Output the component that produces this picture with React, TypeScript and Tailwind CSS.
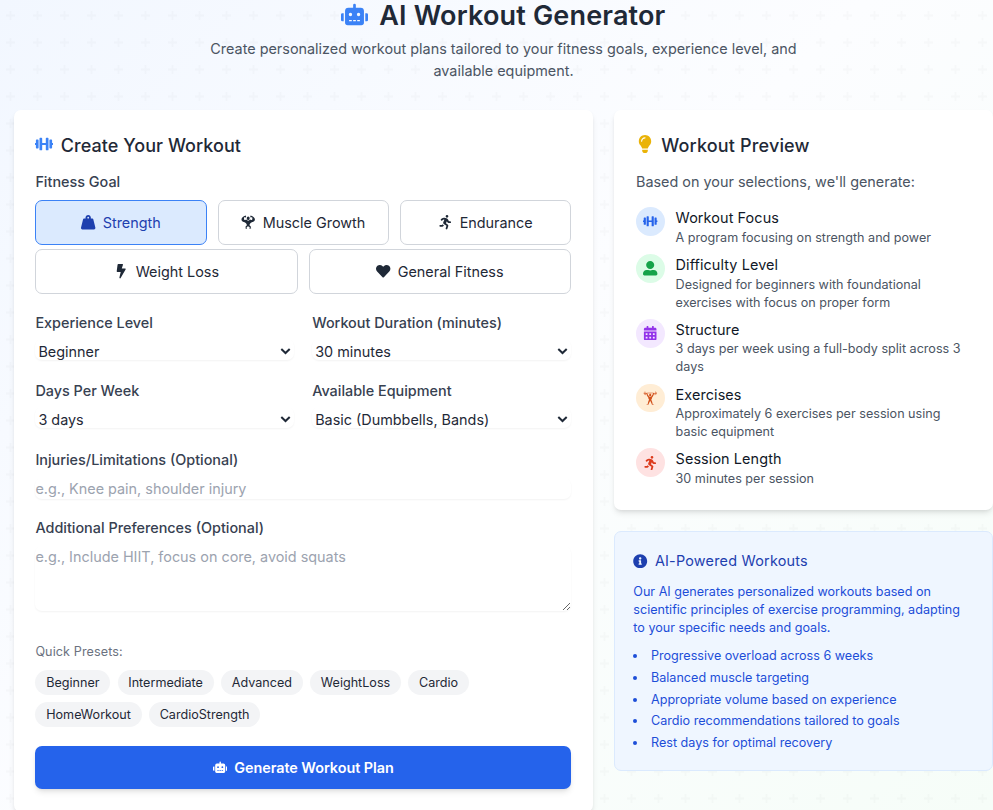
import type { ReactNode } from "react";
import {
  FaBolt,
  FaCalendarAlt,
  FaDumbbell,
  FaHeart,
  FaInfoCircle,
  FaLightbulb,
  FaRobot,
  FaRunning,
  FaUserAlt,
  FaWeightHanging,
} from "react-icons/fa";
import { GiMuscleUp, GiWeightLiftingUp } from "react-icons/gi";

function Backdrop() {
  return (
    <svg className="absolute inset-0 h-full w-full" aria-hidden="true">
      <defs>
        <pattern id="plus" x="6" y="11" width="27" height="27" patternUnits="userSpaceOnUse">
          <path d="M5.4 3.6V0H3.6v3.6H0v1.8h3.6V9h1.8V5.4H9V3.6z" fill="#6b7280" fillOpacity="0.035" />
        </pattern>
      </defs>
      <rect width="100%" height="100%" fill="url(#plus)" />
    </svg>
  );
}

function Goal({ icon, label, active }: { icon: ReactNode; label: string; active?: boolean }) {
  return (
    <button
      type="button"
      className={
        active
          ? "flex h-[45px] flex-1 items-center justify-center gap-[7.2px] rounded-[7px] border border-[#3b82f6] bg-[#dbeafe] text-[#1e40af]"
          : "flex h-[45px] flex-1 items-center justify-center gap-[7.2px] rounded-[7px] border border-[#d1d5db] text-[#1f2937]"
      }
    >
      {icon}
      <span>{label}</span>
    </button>
  );
}

function Field({ label, value }: { label: string; value: string }) {
  return (
    <div className="flex-1">
      <label className="block h-[22px] font-medium leading-[22px] text-[#374151]">{label}</label>
      <div className="mt-[5px] flex h-[21px] items-center justify-between rounded-[7px] pt-[5px] pr-[3px] pl-[3px] text-[#1f2937] shadow-[0_1px_2px_rgba(0,0,0,0.05)]">
        <span>{value}</span>
        <svg width="11" height="7" viewBox="0 0 11 7" fill="none" className="mb-[1px]">
          <path d="M1.3 1 5.5 5 9.7 1" stroke="#1f2937" strokeWidth="2" />
        </svg>
      </div>
    </div>
  );
}

function PreviewRow({
  icon,
  tone,
  title,
  text,
}: {
  icon: ReactNode;
  tone: string;
  title: string;
  text: string;
}) {
  return (
    <li className="flex gap-[10.8px]">
      <span
        className={`flex h-[28.8px] w-[28.8px] shrink-0 items-center justify-center rounded-full text-[14.4px] ${tone}`}
      >
        {icon}
      </span>
      <div>
        <h3 className="h-[21.6px] text-[14.4px] leading-[21.6px] tracking-[0.1px] text-[#111827]">{title}</h3>
        <p className="text-[12.6px] leading-[18px] text-[#4b5563]">{text}</p>
      </div>
    </li>
  );
}

const presets = [
  ["Beginner", "Intermediate", "Advanced", "WeightLoss", "Cardio"],
  ["HomeWorkout", "CardioStrength"],
];

const features = [
  "Progressive overload across 6 weeks",
  "Balanced muscle targeting",
  "Appropriate volume based on experience",
  "Cardio recommendations tailored to goals",
  "Rest days for optimal recovery",
];

export default function App() {
  return (
    <div className="relative h-[810px] w-[993px] overflow-hidden bg-[linear-gradient(135deg,#f2f7ff_0%,#fcfdff_48%,#f6fdf8_100%)] font-['Inter',sans-serif] text-[14.4px]">
      <Backdrop />
      <div className="relative pl-[14px]">
        <header className="flex h-[110px] flex-col items-center">
          <h1 className="flex h-[32px] items-center gap-[10.8px] text-[27px] font-semibold leading-[32px] tracking-[0.17px] text-[#1f2937]">
            <FaRobot className="-mt-[3px] text-[27px] text-[#3b82f6]" />
            <span>AI Workout Generator</span>
          </h1>
          <p className="mt-[6px] w-[605px] text-center leading-[22px] text-[#4b5563]">
            Create personalized workout plans tailored to your fitness goals, experience level, and available equipment.
          </p>
        </header>

        <main className="flex items-start gap-[21px]">
          <section className="h-[702px] w-[579px] rounded-[7px] bg-white pt-[22px] pr-[22px] pl-[21.4px] shadow-[0_4px_6px_-1px_rgba(0,0,0,0.1),0_2px_4px_-2px_rgba(0,0,0,0.1)]">
            <h2 className="flex h-[26px] items-center gap-[7.4px] text-[18px] font-medium tracking-[0.05px] text-[#1f2937]">
              <FaDumbbell className="-mt-[2px] text-[18px] text-[#3b82f6]" />
              <span>Create Your Workout</span>
            </h2>
            <p className="mt-[13px] h-[22px] font-medium leading-[22px] text-[#374151]">Fitness Goal</p>
            <div className="mt-[7px] flex gap-[11px]">
              <Goal active icon={<FaWeightHanging />} label="Strength" />
              <Goal icon={<GiMuscleUp />} label="Muscle Growth" />
              <Goal icon={<FaRunning />} label="Endurance" />
            </div>
            <div className="mt-[4px] flex gap-[11px]">
              <Goal icon={<FaBolt />} label="Weight Loss" />
              <Goal icon={<FaHeart />} label="General Fitness" />
            </div>
            <div className="mt-[18px] flex gap-[18px]">
              <Field label="Experience Level" value="Beginner" />
              <Field label="Workout Duration (minutes)" value="30 minutes" />
            </div>
            <div className="mt-[20px] flex gap-[18px]">
              <Field label="Days Per Week" value="3 days" />
              <Field label="Available Equipment" value="Basic (Dumbbells, Bands)" />
            </div>
            <label className="mt-[21px] block h-[22px] font-medium leading-[22px] text-[#374151]">
              Injuries/Limitations (Optional)
            </label>
            <input
              className="mt-[7px] block h-[21px] w-full rounded-[7px] text-[#1f2937] shadow-[0_1px_2px_rgba(0,0,0,0.05)] placeholder:text-[#9ca3af]"
              placeholder="e.g., Knee pain, shoulder injury"
            />
            <label className="mt-[18px] block h-[22px] font-medium leading-[22px] text-[#374151]">
              Additional Preferences (Optional)
            </label>
            <textarea
              className="mt-[7px] block h-[65px] w-full rounded-[7px] leading-[22px] text-[#1f2937] shadow-[0_1px_2px_rgba(0,0,0,0.05)] placeholder:text-[#9ca3af]"
              placeholder="e.g., Include HIIT, focus on core, avoid squats"
            />
            <p className="mt-[32px] h-[18px] text-[12.6px] leading-[18px] tracking-[0.1px] text-[#6b7280]">
              Quick Presets:
            </p>
            <div className="mt-[9px] flex flex-col gap-[7.2px]">
              {presets.map((row) => (
                <div key={row[0]} className="flex gap-[7.2px]">
                  {row.map((name) => (
                    <button
                      key={name}
                      type="button"
                      className="h-[25px] rounded-full bg-[#f3f4f6] px-[10.8px] text-[12.6px] leading-[25px] text-[#1f2937]"
                    >
                      {name}
                    </button>
                  ))}
                </div>
              ))}
            </div>
            <button
              type="button"
              className="mt-[18.8px] flex h-[43px] w-full items-center justify-center gap-[7.2px] rounded-[7px] bg-[#2563eb] font-semibold text-white shadow-[0_4px_6px_-1px_rgba(0,0,0,0.1),0_2px_4px_-2px_rgba(0,0,0,0.1)]"
            >
              <FaRobot className="text-[14.4px]" />
              <span className="tracking-[-0.05px]">Generate Workout Plan</span>
            </button>
          </section>

          <aside className="w-[379px]">
            <section className="h-[400px] rounded-[7px] bg-white px-[22px] pt-[22px] shadow-[0_4px_6px_-1px_rgba(0,0,0,0.1),0_2px_4px_-2px_rgba(0,0,0,0.1)]">
              <h2 className="flex h-[26px] items-center gap-[7.2px] text-[18px] font-medium tracking-[0.16px] text-[#1f2937]">
                <FaLightbulb className="-mt-[2px] text-[18px] text-[#eab308]" />
                <span>Workout Preview</span>
              </h2>
              <p className="mt-[13px] h-[22px] leading-[22px] text-[#4b5563]">Based on your selections, we'll generate:</p>
              <ul className="mt-[14.2px] flex flex-col gap-[7.2px]">
                <PreviewRow
                  icon={<FaDumbbell />}
                  tone="bg-[#dbeafe] text-[#2563eb]"
                  title="Workout Focus"
                  text="A program focusing on strength and power"
                />
                <PreviewRow
                  icon={<FaUserAlt />}
                  tone="bg-[#dcfce7] text-[#16a34a]"
                  title="Difficulty Level"
                  text="Designed for beginners with foundational exercises with focus on proper form"
                />
                <PreviewRow
                  icon={<FaCalendarAlt />}
                  tone="bg-[#f3e8ff] text-[#9333ea]"
                  title="Structure"
                  text="3 days per week using a full-body split across 3 days"
                />
                <PreviewRow
                  icon={<GiWeightLiftingUp />}
                  tone="bg-[#ffedd5] text-[#d2501a]"
                  title="Exercises"
                  text="Approximately 6 exercises per session using basic equipment"
                />
                <PreviewRow
                  icon={<FaRunning />}
                  tone="bg-[#fee2e2] text-[#dc3a1c]"
                  title="Session Length"
                  text="30 minutes per session"
                />
              </ul>
            </section>

            <section className="mt-[21px] h-[240px] rounded-[7px] border border-[#dbeafe] bg-[#eff6ff] px-[18.3px] pt-[18px]">
              <h2 className="flex h-[22px] items-center gap-[7.2px] text-[14.4px] tracking-[0.22px] text-[#1e40af]">
                <FaInfoCircle />
                <span>AI-Powered Workouts</span>
              </h2>
              <p className="mt-[11px] text-[12.6px] leading-[18px] text-[#1d4ed8]">
                Our AI generates personalized workouts based on scientific principles of exercise programming, adapting to
                your specific needs and goals.
              </p>
              <ul className="mt-[10px] flex flex-col gap-[3.75px] text-[12.6px] leading-[18px] text-[#1d4ed8]">
                {features.map((feature) => (
                  <li key={feature} className="flex items-center gap-[13.7px]">
                    <span className="h-[4px] w-[4px] rounded-full bg-[#1d4ed8]" />
                    <span>{feature}</span>
                  </li>
                ))}
              </ul>
            </section>
          </aside>
        </main>
      </div>
    </div>
  );
}
